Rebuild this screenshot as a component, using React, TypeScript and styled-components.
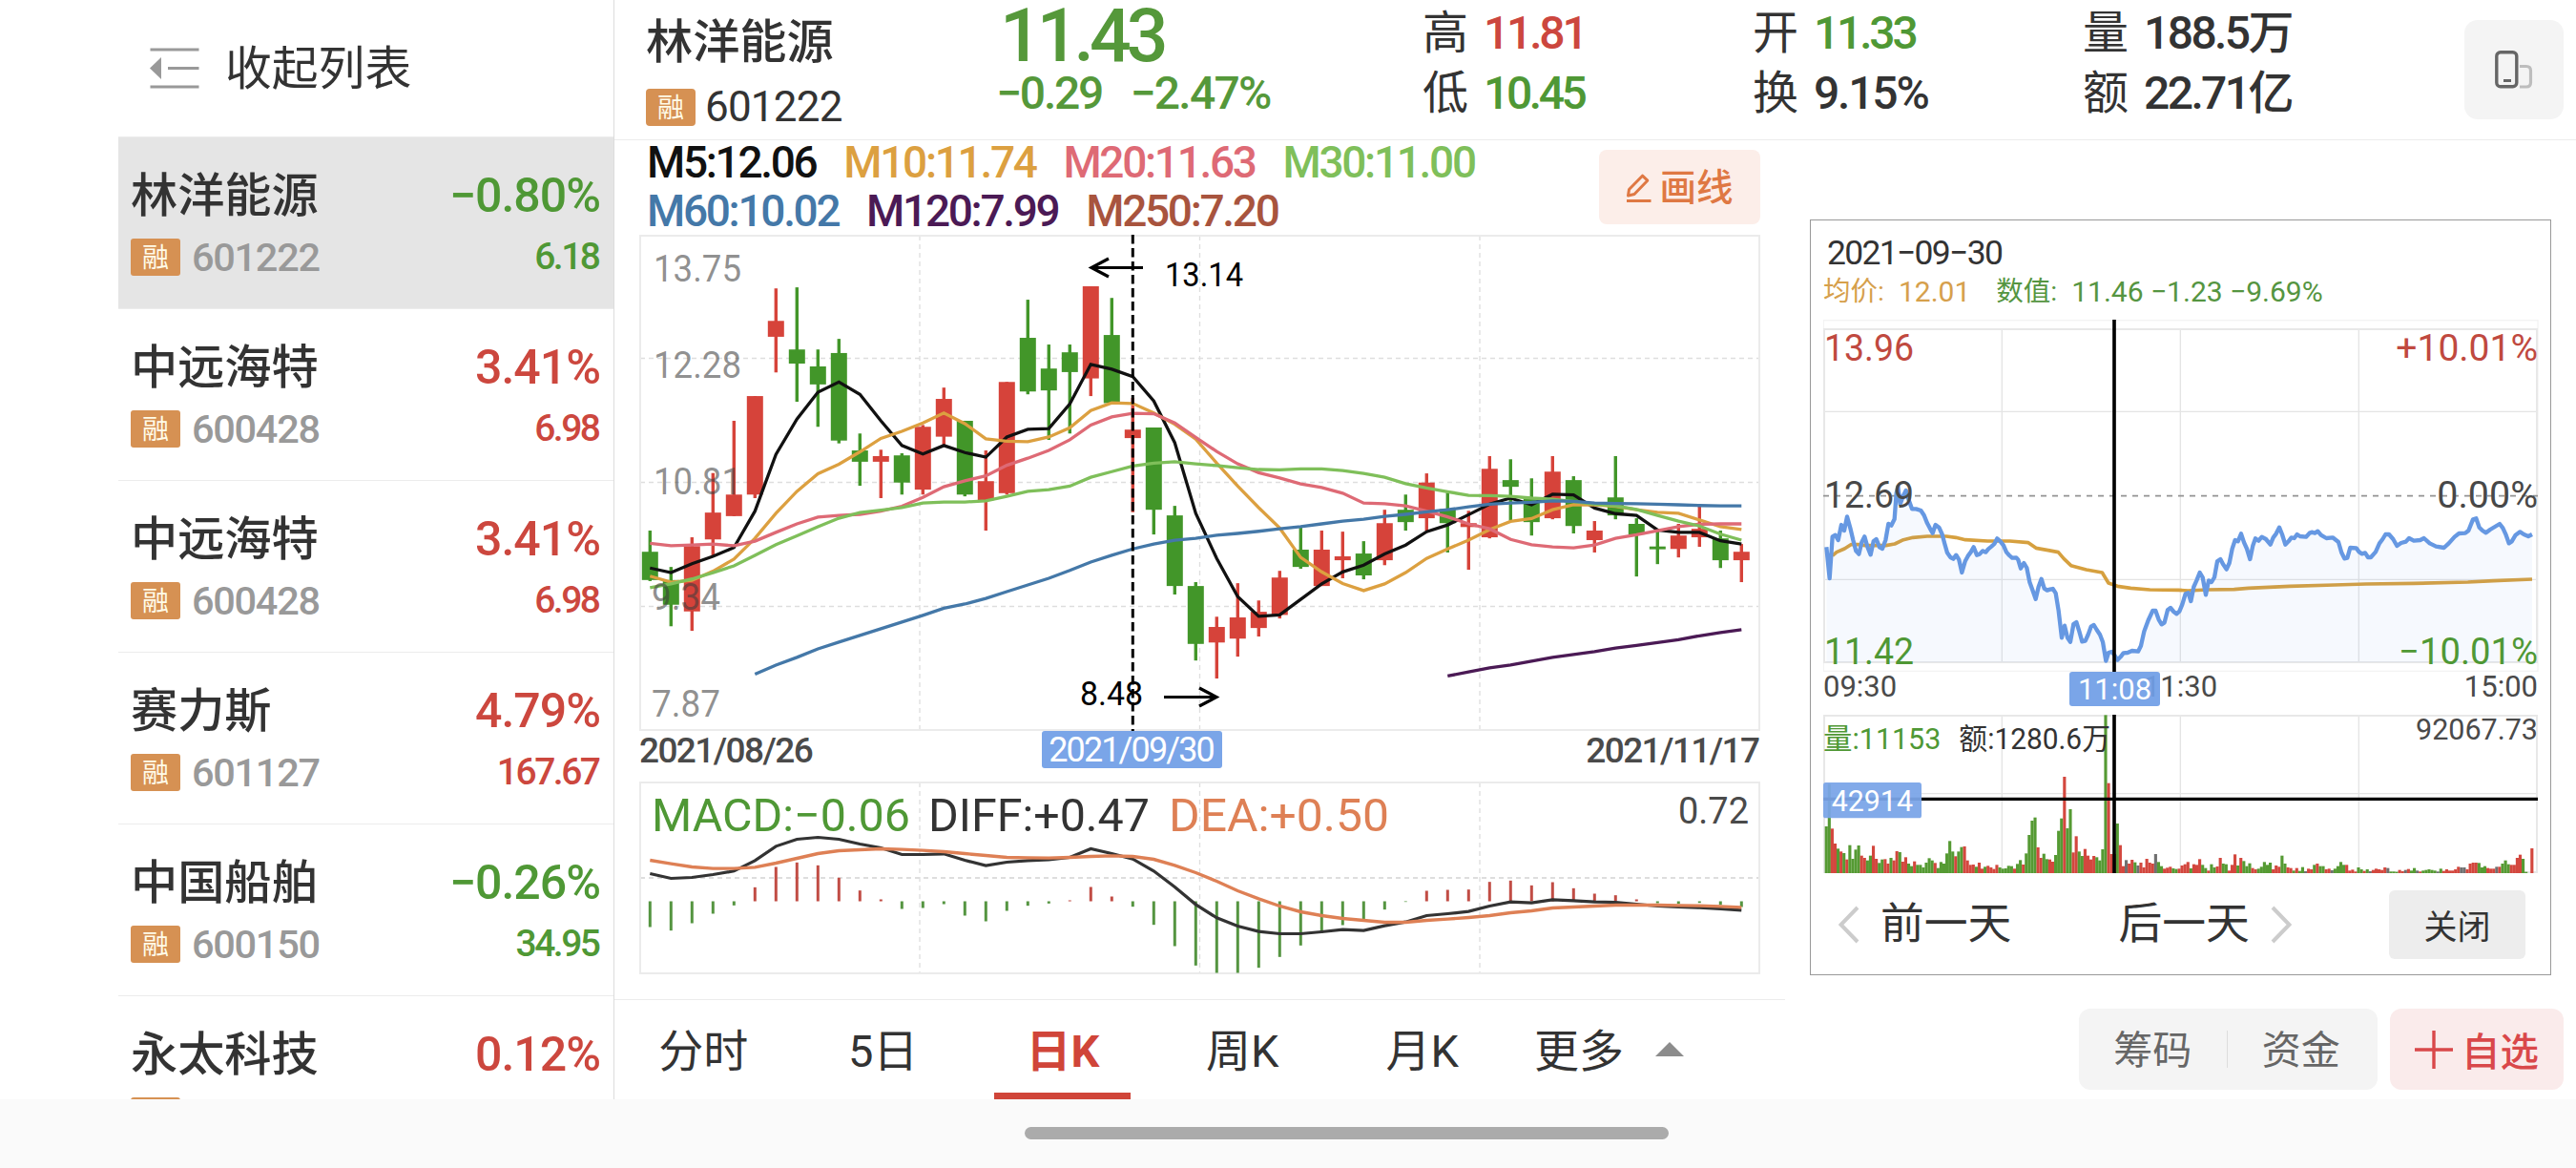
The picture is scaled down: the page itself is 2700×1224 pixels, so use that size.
import styled, { createGlobalStyle } from "styled-components";

const GREEN = "#4f9835";
const RED = "#cc473e";
const INK = "#333333";
const FONT = `Roboto, "Noto Sans CJK SC", sans-serif`;

const GlobalStyle = createGlobalStyle`
  * {
    box-sizing: border-box;
  }
  body {
    margin: 0;
    background: #fff;
    font-family: ${FONT};
    color: ${INK};
  }
  svg {
    display: block;
    flex: none;
  }
  svg text {
    font-family: ${FONT};
  }
`;

const Screen = styled.div`
  width: 2700px;
  height: 1224px;
  display: flex;
  flex-direction: column;
  overflow: hidden;
`;

const Content = styled.div`
  height: 1152px;
  padding-left: 124px;
  display: flex;
  overflow: hidden;
`;

const HomeArea = styled.div`
  height: 72px;
  padding: 29px 0 0 1074px;
  background: #fafafa;
`;

const HomeBar = styled.div`
  width: 675px;
  height: 13px;
  border-radius: 7px;
  background: #ababab;
`;

// sidebar
const Sidebar = styled.aside`
  flex: none;
  width: 520px;
  border-right: 1px solid #dcdcdc;
`;

const Collapse = styled.div`
  height: 143px;
  padding-left: 33px;
  display: flex;
  align-items: center;
  gap: 27px;
`;

const CollapseLabel = styled.span`
  padding-top: 2px;
  font-size: 48.8px;
  line-height: 50px;
`;

const StockRow = styled.div<{ $active?: boolean }>`
  height: 180px;
  padding: 36px 13px 0 13px;
  border-top: 1px solid #ececec;
  background: ${({ $active }) => ($active ? "#e5e5e5" : "#fff")};
`;

const RowLine = styled.div<{ $height: number }>`
  height: ${({ $height }) => $height}px;
  display: flex;
  align-items: center;
  justify-content: space-between;
`;

const StockName = styled.span`
  display: block;
  font-size: 49.2px;
  line-height: 50px;
  font-weight: 500;
  white-space: nowrap;
`;

const CodeGroup = styled.div`
  display: flex;
  align-items: center;
  gap: 12px;
`;

const MarginTag = styled.span<{ $radius?: number }>`
  width: 52px;
  height: 39px;
  display: flex;
  align-items: center;
  justify-content: center;
  border-radius: ${({ $radius }) => $radius ?? 3}px;
  background: #d69153;
  color: #fffbe8;
  font-size: 28px;
  line-height: 39px;
  padding-top: 2px;
`;

const Num = styled.span<{
  $size: number;
  $color?: string;
  $weight?: number;
  $spacing?: number;
}>`
  font-size: ${({ $size }) => $size}px;
  line-height: 1;
  color: ${({ $color }) => $color ?? INK};
  font-weight: ${({ $weight }) => $weight ?? 500};
  letter-spacing: ${({ $spacing }) => $spacing ?? 0}px;
  margin-right: ${({ $spacing }) => -($spacing ?? 0)}px;
  white-space: nowrap;
`;

// quote header
const Main = styled.main`
  flex: 1;
  display: flex;
  flex-direction: column;
`;

const QuoteHeader = styled.header`
  flex: none;
  height: 147px;
  padding: 0 13px 0 33px;
  display: flex;
  border-bottom: 1px solid #ececec;
`;

const Identity = styled.div`
  width: 367px;
  padding-top: 19px;
`;

const IdentityCode = styled(CodeGroup)`
  margin-top: 21px;
  gap: 10px;
`;

const LastPrice = styled.div`
  width: 447px;
`;

const BigPrice = styled.div`
  height: 76px;
  padding-left: 4px;
  display: flex;
  align-items: center;
`;

const Change = styled.div`
  height: 44px;
  display: flex;
  align-items: center;
  gap: 27px;
`;

const StatGrid = styled.div`
  flex: 1;
  height: 129px;
  padding-top: 4px;
  display: grid;
  grid-template-columns: 346px 346px 1fr;
  grid-template-rows: 62px 63px;
`;

const Stat = styled.div`
  display: flex;
  align-items: center;
  gap: 16px;
  font-size: 48px;
  line-height: 62px;
`;

const LayoutButton = styled.button`
  width: 104px;
  height: 104px;
  margin-top: 21px;
  padding: 0;
  display: flex;
  align-items: center;
  justify-content: center;
  border: 0;
  border-radius: 14px;
  background: #f4f4f4;
`;

// k-line column
const Body = styled.div`
  flex: 1;
  display: flex;
`;

const KColumn = styled.section`
  flex: none;
  width: 1227px;
`;

const LegendBar = styled.div`
  height: 99px;
  padding: 0 26px 0 34px;
  display: flex;
  justify-content: space-between;
`;

const LegendRows = styled.div`
  display: flex;
  flex-direction: column;
  gap: 5px;
`;

const LegendRow = styled.div`
  height: 46px;
  display: flex;
  align-items: center;
  gap: 26.5px;
`;

const DrawButton = styled.button`
  width: 169px;
  height: 78px;
  margin-top: 10px;
  padding: 1px 0 0;
  display: flex;
  align-items: center;
  justify-content: center;
  gap: 8px;
  border: 0;
  border-radius: 8px;
  background: #fceee9;
  color: #df7843;
  font-family: ${FONT};
  font-size: 38.5px;
  font-weight: 500;
  line-height: 40px;
`;

const ChartArea = styled.div`
  padding-left: 26px;
`;

const DateRow = styled.div`
  position: relative;
  width: 1176px;
  height: 53px;
  padding: 2px 1px 0 0;
  display: flex;
  align-items: flex-start;
  justify-content: space-between;
`;

const CursorDate = styled.span`
  position: absolute;
  left: 422px;
  top: 0;
  width: 189px;
  height: 39px;
  display: flex;
  align-items: center;
  justify-content: center;
  border-radius: 3px;
  background: #7aa5e8;
`;

const Tabs = styled.nav`
  height: 105px;
  margin-top: 26px;
  display: flex;
  border-top: 1px solid #ececec;
`;

const Tab = styled.div<{ $active?: boolean }>`
  position: relative;
  width: 188.4px;
  display: flex;
  justify-content: center;
  padding: 24px 2px 0 0;
  font-size: 47px;
  line-height: 60px;
  font-weight: ${({ $active }) => ($active ? 700 : 400)};
  color: ${({ $active }) => ($active ? "#d04539" : INK)};

  &::after {
    content: "";
    display: ${({ $active }) => ($active ? "block" : "none")};
    position: absolute;
    left: 21px;
    bottom: 0;
    width: 143px;
    height: 7px;
    background: #d04539;
  }
`;

const MoreTab = styled(Tab)`
  width: auto;
  padding-left: 22px;
  gap: 33px;
`;

const Caret = styled.span`
  width: 0;
  height: 0;
  margin-top: 20px;
  border-left: 15px solid transparent;
  border-right: 15px solid transparent;
  border-bottom: 15px solid #8c8c8c;
`;

// intraday card
const Side = styled.section`
  flex: 1;
  padding: 83px 13px 0 26px;
`;

const DayCard = styled.div`
  width: 777px;
  height: 792px;
  padding: 17px 13px 0;
  border: 1px solid #999;
`;

const CardDate = styled.div`
  height: 35px;
  padding-left: 4px;
  display: flex;
  align-items: center;
`;

const CardLegend = styled.div`
  height: 52px;
  display: flex;
  align-items: flex-start;
`;

const LegendText = styled.span<{ $color: string; $after?: number }>`
  display: flex;
  gap: 15px;
  margin-right: ${({ $after }) => $after ?? 0}px;
  color: ${({ $color }) => $color};
  font-size: 28.5px;
  line-height: 45px;
  white-space: nowrap;
`;

const LegendValue = styled.span`
  font-size: 30px;
`;

const TimeRow = styled.div`
  position: relative;
  height: 45px;
  display: flex;
  align-items: flex-start;
  justify-content: space-between;
`;

const TimeSlot = styled.span`
  height: 31px;
  display: flex;
  align-items: center;
`;

const CursorTime = styled.span`
  position: absolute;
  left: 258px;
  top: 0;
  width: 95px;
  height: 36px;
  display: flex;
  align-items: center;
  justify-content: center;
  border-radius: 3px;
  background: rgba(112, 158, 230, 0.93);
`;

const DayNav = styled.div`
  height: 107px;
  padding: 0 13px 0 16px;
  display: flex;
  align-items: center;
`;

const NavItem = styled.div<{ $after: number }>`
  display: flex;
  align-items: center;
  gap: 22px;
  margin-right: ${({ $after }) => $after}px;
  font-size: 45.8px;
  line-height: 60px;
`;

const CloseButton = styled.button`
  width: 143px;
  height: 72px;
  padding: 0;
  margin-left: auto;
  border: 0;
  border-radius: 6px;
  background: #ededed;
  color: ${INK};
  font-family: ${FONT};
  font-size: 35px;
`;

const Actions = styled.div`
  margin-top: 35px;
  display: flex;
  justify-content: flex-end;
  gap: 13px;
`;

const SegmentGroup = styled.div`
  width: 313px;
  height: 85px;
  padding-right: 3px;
  display: flex;
  align-items: center;
  border-radius: 12px;
  background: #f4f4f4;
`;

const Segment = styled.span`
  flex: 1;
  padding-top: 2px;
  text-align: center;
  font-size: 41px;
  line-height: 60px;
  color: #666;
`;

const SegmentDivider = styled.span`
  width: 1px;
  height: 39px;
  background: #ddd;
`;

const WatchButton = styled.button`
  width: 182px;
  height: 85px;
  padding: 0;
  display: flex;
  align-items: center;
  justify-content: center;
  gap: 9px;
  border: 0;
  border-radius: 12px;
  background: #faebeb;
  color: #d9484a;
  font-family: ${FONT};
  font-size: 40.5px;
  font-weight: 500;
`;

const stocks = [
  { name: "林洋能源", code: "601222", pct: "−0.80%", price: "6.18" },
  { name: "中远海特", code: "600428", pct: "3.41%", price: "6.98" },
  { name: "中远海特", code: "600428", pct: "3.41%", price: "6.98" },
  { name: "赛力斯", code: "601127", pct: "4.79%", price: "167.67" },
  { name: "中国船舶", code: "600150", pct: "−0.26%", price: "34.95" },
  { name: "永太科技", code: "", pct: "0.12%", price: "" },
];

const averages = [
  [
    { label: "M5:12.06", color: "#111111" },
    { label: "M10:11.74", color: "#dca040" },
    { label: "M20:11.63", color: "#de6a75" },
    { label: "M30:11.00", color: "#7fbf5a" },
  ],
  [
    { label: "M60:10.02", color: "#4478a8" },
    { label: "M120:7.99", color: "#4b1a55" },
    { label: "M250:7.20", color: "#a8543e" },
  ],
];

const stats = [
  { label: "高", value: "11.81", color: RED, spacing: -3.2 },
  { label: "开", value: "11.33", color: GREEN, spacing: -3.2 },
  { label: "量", value: "188.5万", color: INK, spacing: -2.6 },
  { label: "低", value: "10.45", color: GREEN, spacing: -3.4 },
  { label: "换", value: "9.15%", color: INK, spacing: -2.2 },
  { label: "额", value: "22.71亿", color: INK, spacing: -2.6 },
];

// [high, body top, body bottom, low, up]
const candles = [
  [881, 941, 1021, 1024, 0], [984, 1021, 1091, 1152, 0], [900, 925, 1110, 1165, 1],
  [718, 830, 906, 955, 1], [570, 779, 840, 840, 1], [500, 500, 779, 789, 1],
  [195, 287, 332, 433, 1], [192, 368, 408, 516, 0], [368, 416, 467, 587, 0],
  [338, 378, 626, 634, 0], [606, 654, 686, 754, 0], [652, 670, 686, 789, 1],
  [662, 668, 745, 779, 0], [582, 587, 765, 779, 1], [476, 508, 615, 640, 1],
  [570, 570, 779, 784, 0], [654, 741, 795, 881, 1], [460, 460, 775, 779, 1],
  [227, 335, 487, 495, 0], [354, 422, 484, 624, 0], [354, 376, 432, 606, 0],
  [189, 189, 450, 500, 1], [222, 327, 520, 520, 0], [505, 595, 619, 829, 1],
  [589, 589, 822, 892, 0], [811, 838, 1038, 1062, 0], [1027, 1038, 1202, 1249, 0],
  [1125, 1154, 1198, 1300, 1], [1030, 1127, 1187, 1238, 1], [1079, 1111, 1157, 1181, 1],
  [995, 1014, 1120, 1130, 1], [868, 935, 984, 989, 0], [881, 935, 1038, 1038, 1],
  [884, 954, 965, 1016, 1], [911, 946, 1008, 1019, 0], [822, 860, 965, 979, 1],
  [779, 822, 857, 881, 0], [719, 745, 846, 881, 1], [774, 820, 860, 943, 0],
  [825, 860, 871, 992, 1], [670, 706, 900, 903, 1], [679, 738, 757, 853, 0],
  [733, 787, 857, 895, 0], [670, 714, 846, 849, 1], [727, 738, 868, 889, 0],
  [854, 881, 908, 943, 1], [670, 787, 838, 849, 0], [846, 862, 892, 1011, 0],
  [880, 926, 934, 976, 0], [862, 895, 933, 957, 1], [808, 876, 900, 927, 1],
  [881, 903, 965, 987, 0], [919, 941, 965, 1027, 1],
];

const maLines = [
  {
    color: "#111111",
    from: 0,
    data: [987, 1000, 975, 954, 929, 826, 665, 565, 489, 460, 495, 570, 640, 664, 640, 660, 673, 616, 594, 592, 522, 410, 424, 445, 514, 632, 832, 960, 1068, 1124, 1120, 1076, 1032, 998, 979, 947, 922, 884, 865, 836, 806, 789, 808, 778, 780, 817, 833, 838, 879, 886, 886, 910, 919],
  },
  {
    color: "#dca040",
    from: 0,
    data: [1010, 1027, 1022, 996, 962, 903, 832, 770, 720, 693, 658, 620, 600, 576, 548, 578, 621, 628, 629, 616, 590, 541, 519, 521, 548, 580, 622, 690, 755, 816, 874, 957, 998, 1031, 1051, 1032, 1000, 960, 933, 908, 878, 855, 847, 822, 808, 808, 812, 822, 829, 832, 851, 870, 878],
  },
  {
    color: "#de6a75",
    from: 0,
    data: [917, 924, 922, 919, 924, 911, 886, 862, 843, 838, 835, 826, 812, 787, 757, 740, 726, 696, 676, 654, 624, 582, 559, 549, 550, 576, 617, 657, 692, 717, 732, 749, 759, 775, 803, 805, 811, 826, 842, 862, 876, 906, 921, 927, 930, 922, 903, 893, 881, 870, 863, 862, 862],
  },
  {
    color: "#7fbf5a",
    from: 0,
    data: [1043, 1032, 1018, 1000, 981, 951, 921, 896, 870, 846, 830, 823, 816, 803, 800, 800, 797, 784, 770, 765, 755, 730, 714, 698, 690, 686, 692, 697, 703, 708, 709, 706, 706, 711, 719, 730, 748, 760, 771, 781, 782, 784, 789, 792, 799, 806, 811, 821, 838, 854, 868, 891, 908],
  },
  {
    color: "#4478a8",
    from: 5,
    data: [1288, 1262, 1240, 1216, 1197, 1178, 1159, 1140, 1121, 1101, 1089, 1073, 1054, 1035, 1016, 994, 970, 951, 933, 919, 908, 903, 894, 889, 883, 876, 870, 862, 854, 849, 841, 835, 828, 822, 814, 806, 803, 801, 797, 798, 803, 804, 805, 806, 808, 810, 811, 811],
  },
  {
    color: "#4b1a55",
    from: 38,
    data: [1293, 1281, 1270, 1262, 1251, 1240, 1232, 1224, 1214, 1206, 1198, 1190, 1179, 1170, 1162],
  },
];

const macdBars = [516, 527, 504, 474, 448, 391, 327, 313, 322, 361, 401, 429, 459, 456, 444, 480, 498, 465, 449, 442, 432, 390, 420, 452, 509, 576, 637, 660, 660, 644, 610, 574, 535, 510, 491, 461, 437, 402, 399, 398, 374, 370, 385, 375, 394, 411, 416, 429, 441, 443, 440, 446, 453];
const diffLine = [348, 363, 360, 351, 340, 307, 262, 240, 234, 240, 255, 267, 288, 288, 286, 306, 323, 312, 307, 304, 297, 270, 285, 302, 340, 390, 445, 487, 513, 530, 537, 537, 531, 524, 527, 512, 500, 480, 474, 467, 450, 437, 440, 430, 433, 437, 438, 444, 450, 453, 455, 459, 463];
const deaLine = [306, 317, 327, 332, 332, 328, 315, 300, 285, 276, 273, 270, 272, 275, 279, 285, 291, 297, 298, 299, 297, 294, 292, 294, 303, 322, 345, 372, 402, 427, 450, 468, 480, 489, 495, 501, 501, 495, 491, 486, 480, 471, 465, 456, 453, 450, 447, 447, 447, 448, 449, 451, 454];

const dayPrice =
  "103,1060 113,1158 122,1027 131,1022 140,1038 150,990 159,1008 168,964 178,1000 187,1038 196,1072 205,1082 214,1045 223,1027 233,1062 242,1084 251,1042 260,1035 270,1060 279,1065 289,1038 298,987 307,992 317,972 323,890 328,870 335,925 344,900 353,882 363,915 372,940 385,940 400,945 410,960 420,985 428,1000 437,1016 446,990 457,998 467,1020 475,1050 483,1078 493,1092 502,1097 511,1085 520,1100 529,1140 539,1105 548,1088 557,1076 566,1060 576,1085 585,1082 594,1072 604,1076 612,1066 622,1058 631,1050 640,1033 650,1042 660,1055 669,1076 678,1086 687,1094 700,1093 706,1100 714,1127 724,1110 733,1125 742,1170 751,1195 761,1223 770,1185 779,1160 788,1190 797,1196 806,1193 815,1191 824,1205 833,1260 843,1345 852,1307 861,1345 870,1358 880,1302 889,1296 898,1325 907,1357 917,1355 926,1335 935,1310 944,1305 953,1320 963,1335 972,1358 982,1418 990,1392 1000,1389 1009,1400 1018,1415 1028,1405 1037,1393 1050,1392 1064,1386 1083,1388 1092,1370 1102,1325 1115,1290 1129,1260 1138,1260 1148,1288 1157,1303 1166,1297 1176,1258 1185,1251 1195,1263 1204,1270 1213,1262 1222,1240 1232,1207 1241,1204 1249,1230 1258,1185 1267,1165 1277,1140 1286,1155 1296,1210 1305,1165 1314,1170 1323,1155 1332,1105 1342,1098 1351,1115 1361,1130 1370,1110 1379,1065 1388,1038 1397,1042 1407,1018 1416,1045 1425,1065 1435,1098 1444,1055 1452,1033 1462,1040 1472,1028 1485,1035 1499,1052 1508,1030 1517,1018 1527,998 1536,1020 1546,1052 1556,1042 1565,1030 1574,1032 1583,1020 1592,1026 1611,1028 1622,1016 1631,1013 1639,1016 1648,1010 1658,1022 1675,1032 1695,1030 1713,1044 1723,1078 1732,1096 1741,1094 1750,1062 1769,1063 1778,1075 1787,1081 1797,1078 1806,1092 1815,1092 1830,1075 1842,1048 1852,1035 1861,1020 1872,1020 1885,1035 1897,1056 1910,1047 1925,1043 1935,1032 1950,1040 1970,1038 1982,1032 2000,1048 2020,1058 2045,1062 2060,1048 2078,1028 2092,1017 2112,1016 2122,1008 2136,973 2146,970 2156,998 2166,1008 2177,1015 2190,1005 2205,996 2220,987 2230,1000 2240,1022 2249,1048 2258,1042 2270,1022 2284,1012 2296,1020 2310,1026 2322,1020";

const dayAverage =
  "122,1087 135,1076 160,1065 180,1052 205,1052 225,1055 290,1055 318,1050 345,1037 375,1030 420,1026 480,1026 510,1030 540,1037 610,1041 680,1041 738,1046 762,1063 800,1070 832,1076 850,1097 872,1118 920,1131 970,1140 990,1173 1018,1183 1060,1189 1120,1194 1210,1195 1240,1197 1300,1194 1385,1193 1430,1189 1560,1183 1700,1179 1800,1176 1950,1174 2120,1170 2200,1166 2322,1161";

// height + colour of every minute
const volumes =
  "147g 280g 140r 93r 77g 68r 63g 43r 88g 45g 74g 87g 55r 48r 40g 55g 86r 45r 32g 43g 44r 30r 48g 40r 69r 66g 36r 50r 30g 22g 37r 26g 26g 18g 33g 47g 40g 32r 16g 35g 30g 62g 101g 68g 53r 68g 82g 84r 40r 26r 27r 20g 33r 14r 20g 23r 18r 13r 26r 18g 14g 15g 23g 22g 14r 29g 41g 27r 62g 120g 165g 175g 81r 48r 61g 44g 43r 36r 57g 133g 172g 303r 141g 201g 65r 116r 68g 54g 76r 55r 43r 54r 50g 40g 75g 497g 283r 60r 60r 156g 88r 22r 41x 30r 42r 34g 24x 33r 18r 45r 33r 30r 60x 35g 22g 14r 17r 20r 15g 13g 14r 24r 28r 35r 15g 28r 26r 44r 26g 16g 8r 28g 18g 21r 48r 30g 28g 8r 26r 59r 24g 48r 38g 22g 31g 16r 12r 14g 20g 35g 26g 33g 12r 24r 20r 55g 30g 18r 16r 8g 16r 7g 19g 6x 14r 12r 26g 30r 22g 22g 12r 14r 9x 14g 22g 35g 26g 26r 8r 11r 5r 18g 12g 7r 12g 6x 10r 14r 12r 10r 18r 16x 5g 5g 4g 10r 6r 10x 13r 8g 16g 8x 5r 8g 10g 12g 10g 8g 5x 14g 7r 12r 8r 8r 12r 20r 18x 18x 12r 30r 33r 33r 32g 18g 22g 16r 14r 14r 20x 20r 30g 40g 28g 26r 26r 48r 58r 45g 4g 0g 78r"
    .split(" ")
    .map((v) => ({ height: parseInt(v), kind: v.slice(-1) }));

const volumeColors: Record<string, string> = {
  g: "#559a33",
  r: "#d3473e",
  x: "#707070",
};

const kx = (i: number) => 11.3 + 22 * i;
const ky = (v: number) => (v - 43) / 2.703;
const my = (v: number) => v / 3 - 19.5;
const minuteStep = 2228 / volumes.length;

interface LabelProps {
  x: number;
  y: number;
  size: number;
  width: number;
  fill: string;
  end?: boolean;
  children: string;
}

function Label({ x, y, size, width, fill, end, children }: LabelProps) {
  return (
    <text
      x={x}
      y={y}
      fontSize={size}
      fill={fill}
      textAnchor={end ? "end" : "start"}
      textLength={width}
      lengthAdjust="spacingAndGlyphs"
    >
      {children}
    </text>
  );
}

function KLineChart() {
  return (
    <svg width="1176" height="520" viewBox="0 0 1176 520">
      <g stroke="#dedede" strokeWidth="1.3" strokeDasharray="5 4">
        {[294, 587.5, 881].map((x) => (
          <line key={x} x1={x} x2={x} y1="1" y2="519" />
        ))}
        {[129.5, 259.5, 389.5].map((y) => (
          <line key={y} x1="1" x2="1174" y1={y} y2={y} />
        ))}
      </g>
      <rect x="1" y="1" width="1173" height="518" fill="none" stroke="#ebebeb" strokeWidth="2" />
      {candles.map(([high, top, bottom, low, up], i) => (
        <g key={i} fill={up ? "#d6433a" : "#429629"}>
          <rect x={kx(i) - 1.7} y={ky(high)} width="3.4" height={ky(low) - ky(high)} />
          <rect x={kx(i) - 8.5} y={ky(top)} width="17" height={ky(bottom) - ky(top)} />
        </g>
      ))}
      {maLines.map(({ color, from, data }) => (
        <polyline
          key={color}
          fill="none"
          stroke={color}
          strokeWidth="3.3"
          points={data.map((v, i) => `${kx(i + from)},${ky(v)}`).join(" ")}
        />
      ))}
      <Label x={15} y={49} size={39} width={92} fill="rgba(60,60,60,0.58)">13.75</Label>
      <Label x={15} y={149.5} size={39} width={92} fill="rgba(60,60,60,0.58)">12.28</Label>
      <Label x={15} y={272} size={39} width={92} fill="rgba(60,60,60,0.58)">10.81</Label>
      <Label x={13} y={393} size={39} width={72} fill="rgba(60,60,60,0.58)">9.34</Label>
      <Label x={13} y={504.5} size={39} width={72} fill="rgba(60,60,60,0.58)">7.87</Label>
      <line x1="517.3" x2="517.3" y1="0" y2="520" stroke="#000" strokeWidth="3" strokeDasharray="9.5 4.5" />
      <g fill="none" stroke="#000" strokeWidth="3.2">
        <path d="M528 34.5H474M492 25L474 34.5L492 44" />
        <path d="M550 484.5H605M587 475L605 484.5L587 494" />
      </g>
      <Label x={551} y={53.5} size={34.5} width={82} fill="#000">13.14</Label>
      <Label x={462} y={493} size={34.5} width={66} fill="#000">8.48</Label>
    </svg>
  );
}

function MacdChart() {
  return (
    <svg width="1176" height="202" viewBox="0 0 1176 202">
      <g stroke="#dedede" strokeWidth="1.3" strokeDasharray="5 4">
        {[294, 587.5, 881].map((x) => (
          <line key={x} x1={x} x2={x} y1="1" y2="200" />
        ))}
        <line x1="1" x2="1174" y1="101" y2="101" strokeWidth="1.8" />
      </g>
      <rect x="1" y="1" width="1173" height="200" fill="none" stroke="#ebebeb" strokeWidth="2" />
      {macdBars.map((v, i) => (
        <rect
          key={i}
          x={kx(i) - 1.5}
          y={Math.min(my(v), my(435))}
          width="3"
          height={Math.abs(my(v) - my(435))}
          fill={v < 435 ? "#c14d45" : "#559541"}
        />
      ))}
      <polyline fill="none" stroke={INK} strokeWidth="3.2" points={diffLine.map((v, i) => `${kx(i)},${my(v)}`).join(" ")} />
      <polyline fill="none" stroke="#de8055" strokeWidth="3.4" points={deaLine.map((v, i) => `${kx(i)},${my(v)}`).join(" ")} />
      <Label x={13} y={51.5} size={48} width={271} fill={GREEN}>MACD:−0.06</Label>
      <Label x={303} y={51.5} size={48} width={232} fill={INK}>DIFF:+0.47</Label>
      <Label x={555} y={51.5} size={48} width={231} fill="#de8055">DEA:+0.50</Label>
      <Label x={1163} y={43.5} size={38.5} width={74} fill="#4a4a4a" end>0.72</Label>
    </svg>
  );
}

// drawn on a grid three times finer than the screen
function DayChart() {
  return (
    <svg width="750" height="369" viewBox="93 345 2250 1107">
      <rect x="94" y="347" width="2246" height="1103" fill="none" stroke="#f3f3f3" strokeWidth="4" />
      <g stroke="#e4e4e4" strokeWidth="4">
        <line x1="655" x2="655" y1="375" y2="1422" />
        <line x1="1216" x2="1216" y1="375" y2="1422" />
        <line x1="1777" x2="1777" y1="375" y2="1422" />
        <line x1="96" x2="2337" y1="634" y2="634" />
        <line x1="96" x2="2337" y1="1162" y2="1162" />
      </g>
      <rect x="96" y="375" width="2241" height="1047" fill="none" stroke="#e8e8e8" strokeWidth="6" />
      <line x1="93" x2="2340" y1="899" y2="899" stroke="#949494" strokeWidth="5" strokeDasharray="18 18" />
      <polyline fill="none" stroke="#d6a03f" strokeWidth="11" strokeLinejoin="round" points={dayAverage} />
      <polygon fill="rgba(100,150,240,0.055)" points={`103,1422 ${dayPrice} 2322,1422`} />
      <polyline fill="none" stroke="#6698e2" strokeWidth="13" strokeLinejoin="round" points={dayPrice} />
      <line x1="1008" x2="1008" y1="345" y2="1452" stroke="#000" strokeWidth="11" />
      <Label x={96} y={473} size={117} width={282} fill="#c0493f">13.96</Label>
      <Label x={96} y={935} size={117} width={282} fill="#484848">12.69</Label>
      <Label x={96} y={1427} size={117} width={282} fill={GREEN}>11.42</Label>
      <Label x={2340} y={473} size={117} width={446} fill="#c0493f" end>+10.01%</Label>
      <Label x={2340} y={935} size={117} width={317} fill="#484848" end>0.00%</Label>
      <Label x={2340} y={1427} size={117} width={438} fill={GREEN} end>−10.01%</Label>
    </svg>
  );
}

function VolumeChart() {
  return (
    <svg width="750" height="166" viewBox="93 147 2250 498">
      <g stroke="#e4e4e4" strokeWidth="4">
        <line x1="655" x2="655" y1="150" y2="642" />
        <line x1="1216" x2="1216" y1="150" y2="642" />
        <line x1="1777" x2="1777" y1="150" y2="642" />
        <line x1="96" x2="2337" y1="395" y2="395" />
      </g>
      <rect x="96" y="150" width="2241" height="492" fill="none" stroke="#e8e8e8" strokeWidth="6" />
      {volumes.map(({ height, kind }, i) => (
        <rect key={i} x={98 + i * minuteStep} y={645 - height} width="9.4" height={height} fill={volumeColors[kind]} />
      ))}
      <line x1="1008" x2="1008" y1="147" y2="645" stroke="#000" strokeWidth="11" />
      <line x1="93" x2="2340" y1="412" y2="412" stroke="#000" strokeWidth="10" />
      <Label x={93} y={254} size={92} width={370} fill={GREEN}>量:11153</Label>
      <Label x={520} y={254} size={92} width={476} fill={INK}>额:1280.6万</Label>
      <Label x={2340} y={224} size={92} width={384} fill="#4a4a4a" end>92067.73</Label>
      <rect x="93" y="360" width="309" height="112" rx="8" fill="#7aa5e8" fillOpacity="0.94" />
      <Label x={119} y={449} size={92} width={256} fill="#fff">42914</Label>
    </svg>
  );
}

function CollapseIcon() {
  return (
    <svg width="52" height="44" viewBox="0 0 52 44">
      <path d="M0.5 2H51.5M19 21.5H51.5M0.5 41H51.5" stroke="#999" strokeWidth="3" />
      <path d="M0 21.5L12 10V33Z" fill="#999" />
    </svg>
  );
}

function PhoneIcon() {
  return (
    <svg width="40" height="40" viewBox="0 0 40 40" fill="none">
      <rect x="1.8" y="1.8" width="21" height="36" rx="4" stroke="#666" strokeWidth="3.4" />
      <path d="M9 31.5H17" stroke="#666" strokeWidth="3" />
      <path d="M26 16.5H33Q37.5 16.5 37.5 21V33.5Q37.5 38 33 38H26" stroke="#bdbdbd" strokeWidth="3.2" />
    </svg>
  );
}

function PencilIcon() {
  return (
    <svg width="27" height="32" viewBox="0 0 27 32" fill="none" stroke="#df7843" strokeWidth="3">
      <path d="M3.5 17.5L17.5 3.2L22.8 8.2L9 22.5L2.5 24Z" strokeLinejoin="round" />
      <path d="M1 29.5H26.5" />
    </svg>
  );
}

function Chevron({ right }: { right?: boolean }) {
  return (
    <svg width="22" height="40" viewBox="0 0 22 40" fill="none" stroke="#cccccc" strokeWidth="4">
      <path d={right ? "M2 2L19.5 20L2 38" : "M20 2L2.5 20L20 38"} />
    </svg>
  );
}

export default function App() {
  return (
    <Screen>
      <GlobalStyle />
      <Content>
        <Sidebar>
          <Collapse>
            <CollapseIcon />
            <CollapseLabel>收起列表</CollapseLabel>
          </Collapse>
          {stocks.map(({ name, code, pct, price }, i) => {
            const color = pct.startsWith("−") ? GREEN : RED;
            return (
              <StockRow key={i} $active={i === 0}>
                <RowLine $height={50}>
                  <StockName>{name}</StockName>
                  <Num $size={50} $color={color} $spacing={-1}>{pct}</Num>
                </RowLine>
                <RowLine $height={79}>
                  <CodeGroup>
                    <MarginTag>融</MarginTag>
                    <Num $size={41.5} $color="#999999" $spacing={-1.3}>{code}</Num>
                  </CodeGroup>
                  <Num $size={39} $color={color} $spacing={-2.5}>{price}</Num>
                </RowLine>
              </StockRow>
            );
          })}
        </Sidebar>
        <Main>
          <QuoteHeader>
            <Identity>
              <StockName>林洋能源</StockName>
              <IdentityCode>
                <MarginTag $radius={4}>融</MarginTag>
                <Num $size={44} $weight={400} $spacing={-0.8}>601222</Num>
              </IdentityCode>
            </Identity>
            <LastPrice>
              <BigPrice>
                <Num $size={77} $color="#55983a" $spacing={-5}>11.43</Num>
              </BigPrice>
              <Change>
                <Num $size={48} $color="#55983a" $spacing={-2.2}>−0.29</Num>
                <Num $size={48} $color="#55983a" $spacing={-1.7}>−2.47%</Num>
              </Change>
            </LastPrice>
            <StatGrid>
              {stats.map(({ label, value, color, spacing }) => (
                <Stat key={label}>
                  {label}
                  <Num $size={48} $color={color} $spacing={spacing}>{value}</Num>
                </Stat>
              ))}
            </StatGrid>
            <LayoutButton>
              <PhoneIcon />
            </LayoutButton>
          </QuoteHeader>
          <Body>
            <KColumn>
              <LegendBar>
                <LegendRows>
                  {averages.map((row, i) => (
                    <LegendRow key={i}>
                      {row.map(({ label, color }) => (
                        <Num key={label} $size={46} $color={color} $spacing={-2.3}>{label}</Num>
                      ))}
                    </LegendRow>
                  ))}
                </LegendRows>
                <DrawButton>
                  <PencilIcon />
                  画线
                </DrawButton>
              </LegendBar>
              <ChartArea>
                <KLineChart />
                <DateRow>
                  <Num $size={37} $color="#4a4a4a" $spacing={-1.6}>2021/08/26</Num>
                  <CursorDate>
                    <Num $size={36} $color="#fff" $weight={400} $spacing={-1.9}>2021/09/30</Num>
                  </CursorDate>
                  <Num $size={37} $color="#4a4a4a" $spacing={-1.6}>2021/11/17</Num>
                </DateRow>
                <MacdChart />
              </ChartArea>
              <Tabs>
                <Tab>分时</Tab>
                <Tab>5日</Tab>
                <Tab $active>日K</Tab>
                <Tab>周K</Tab>
                <Tab>月K</Tab>
                <MoreTab>
                  更多
                  <Caret />
                </MoreTab>
              </Tabs>
            </KColumn>
            <Side>
              <DayCard>
                <CardDate>
                  <Num $size={35.5} $weight={400} $spacing={-1.7}>2021−09−30</Num>
                </CardDate>
                <CardLegend>
                  <LegendText $color="#d6a04c" $after={27}>
                    均价:
                    <LegendValue>12.01</LegendValue>
                  </LegendText>
                  <LegendText $color="#559541">
                    数值:
                    <LegendValue>11.46 −1.23 −9.69%</LegendValue>
                  </LegendText>
                </CardLegend>
                <DayChart />
                <TimeRow>
                  <TimeSlot>
                    <Num $size={31} $color="#4a4a4a" $weight={400}>09:30</Num>
                  </TimeSlot>
                  <TimeSlot>
                    <Num $size={31} $color="#4a4a4a" $weight={400}>11:30</Num>
                  </TimeSlot>
                  <TimeSlot>
                    <Num $size={31} $color="#4a4a4a" $weight={400}>15:00</Num>
                  </TimeSlot>
                  <CursorTime>
                    <Num $size={31} $color="#fff" $weight={400}>11:08</Num>
                  </CursorTime>
                </TimeRow>
                <VolumeChart />
                <DayNav>
                  <NavItem $after={112}>
                    <Chevron />
                    前一天
                  </NavItem>
                  <NavItem $after={0}>
                    后一天
                    <Chevron right />
                  </NavItem>
                  <CloseButton>关闭</CloseButton>
                </DayNav>
              </DayCard>
              <Actions>
                <SegmentGroup>
                  <Segment>筹码</Segment>
                  <SegmentDivider />
                  <Segment>资金</Segment>
                </SegmentGroup>
                <WatchButton>
                  <svg width="40" height="40" viewBox="0 0 40 40">
                    <path d="M20 0V40M0 20H40" stroke="#d9484a" strokeWidth="3.4" />
                  </svg>
                  自选
                </WatchButton>
              </Actions>
            </Side>
          </Body>
        </Main>
      </Content>
      <HomeArea>
        <HomeBar />
      </HomeArea>
    </Screen>
  );
}
